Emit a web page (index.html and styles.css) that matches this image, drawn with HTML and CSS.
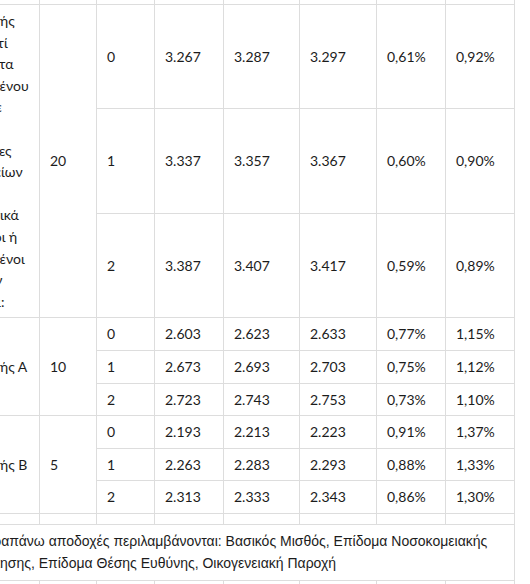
FILE: index.html
```html
<!DOCTYPE html>
<html lang="el">
<head>
<meta charset="utf-8">
<title>Αποδοχές νοσηλευτών</title>
<link rel="stylesheet" href="styles.css">
</head>
<body>
<div class="wrap">
<table class="pay">
  <colgroup>
    <col class="c-cat"><col class="c-yrs"><col class="c-kids"><col class="c-a"><col class="c-b"><col class="c-c"><col class="c-d"><col class="c-e">
  </colgroup>
  <tbody>
    <tr class="prev">
      <td>Κατηγορία</td><td>Έτη</td><td>Παιδιά</td><td>2024</td><td>2025</td><td>2026</td><td>2025</td><td>2026</td>
    </tr>
    <tr>
      <td class="cat" rowspan="3">Νοσηλευτής<br>ΠΕ/ΤΕ αντί<br>ή ειδικότητα<br>εξειδικευμένου<br>Κλινική σε<br>ή ΜΕΝ<br>σε Μονάδες<br>Νοσοκομείων<br>ΕΣΥ και<br>Νοσηλευτικά<br>Τεχνολόγοι ή<br>εξειδικευμένοι<br>Υγείας την<br>Κοινότητα:</td>
      <td rowspan="3">20</td>
      <td>0</td><td>3.267</td><td>3.287</td><td>3.297</td><td>0,61%</td><td>0,92%</td>
    </tr>
    <tr>
      <td>1</td><td>3.337</td><td>3.357</td><td>3.367</td><td>0,60%</td><td>0,90%</td>
    </tr>
    <tr>
      <td>2</td><td>3.387</td><td>3.407</td><td>3.417</td><td>0,59%</td><td>0,89%</td>
    </tr>
    <tr>
      <td class="cat" rowspan="3">Νοσηλευτής Α</td>
      <td rowspan="3">10</td>
      <td>0</td><td>2.603</td><td>2.623</td><td>2.633</td><td>0,77%</td><td>1,15%</td>
    </tr>
    <tr>
      <td>1</td><td>2.673</td><td>2.693</td><td>2.703</td><td>0,75%</td><td>1,12%</td>
    </tr>
    <tr>
      <td>2</td><td>2.723</td><td>2.743</td><td>2.753</td><td>0,73%</td><td>1,10%</td>
    </tr>
    <tr>
      <td class="cat" rowspan="3">Νοσηλευτής Β</td>
      <td rowspan="3">5</td>
      <td>0</td><td>2.193</td><td>2.213</td><td>2.223</td><td>0,91%</td><td>1,37%</td>
    </tr>
    <tr>
      <td>1</td><td>2.263</td><td>2.283</td><td>2.293</td><td>0,88%</td><td>1,33%</td>
    </tr>
    <tr>
      <td>2</td><td>2.313</td><td>2.333</td><td>2.343</td><td>0,86%</td><td>1,30%</td>
    </tr>
    <tr class="blank">
      <td></td><td></td><td></td><td></td><td></td><td></td><td></td><td></td>
    </tr>
    <tr>
      <td class="note" colspan="8">(*)Οι παραπάνω αποδοχές περιλαμβάνονται: Βασικός Μισθός, Επίδομα Νοσοκομειακής<br>Απασχόλησης, Επίδομα Θέσης Ευθύνης, Οικογενειακή Παροχή</td>
    </tr>
    <tr>
      <td>&nbsp;</td><td>&nbsp;</td><td>&nbsp;</td><td>&nbsp;</td><td>&nbsp;</td><td>&nbsp;</td><td>&nbsp;</td><td>&nbsp;</td>
    </tr>
  </tbody>
</table>
</div>
</body>
</html>
```

FILE: styles.css
```css
html, body {
  margin: 0;
  padding: 0;
  background: #ffffff;
}

body {
  font-family: Lato, "Open Sans", sans-serif;
  color: #1c1c1c;
}

.wrap {
  width: 530px;
  height: 584px;
  overflow: hidden;
}

.pay {
  border-collapse: collapse;
  table-layout: fixed;
  width: 588px;
  margin-left: -74px;
  margin-top: -36px;
}

.c-cat { width: 113px; }
.c-yrs { width: 57px; }
.c-kids { width: 58px; }
.c-a { width: 69px; }
.c-b { width: 76px; }
.c-c { width: 77px; }
.c-d { width: 69px; }
.c-e { width: 69px; }

.pay td {
  border: 1px solid #dddddd;
  padding: 5px 10px;
  font-size: 14px;
  line-height: 21.6px;
  vertical-align: middle;
  text-align: left;
  white-space: nowrap;
  overflow: hidden;
}

.pay .prev td {
  height: 29px;
}

.pay .blank td {
  line-height: 0;
  height: 0;
}

.pay .note {
  padding-left: 16px;
  font-family: "Liberation Sans", Arial, sans-serif;
  font-size: 14px;
  line-height: 22.5px;
  color: #1c1c1c;
}
```
